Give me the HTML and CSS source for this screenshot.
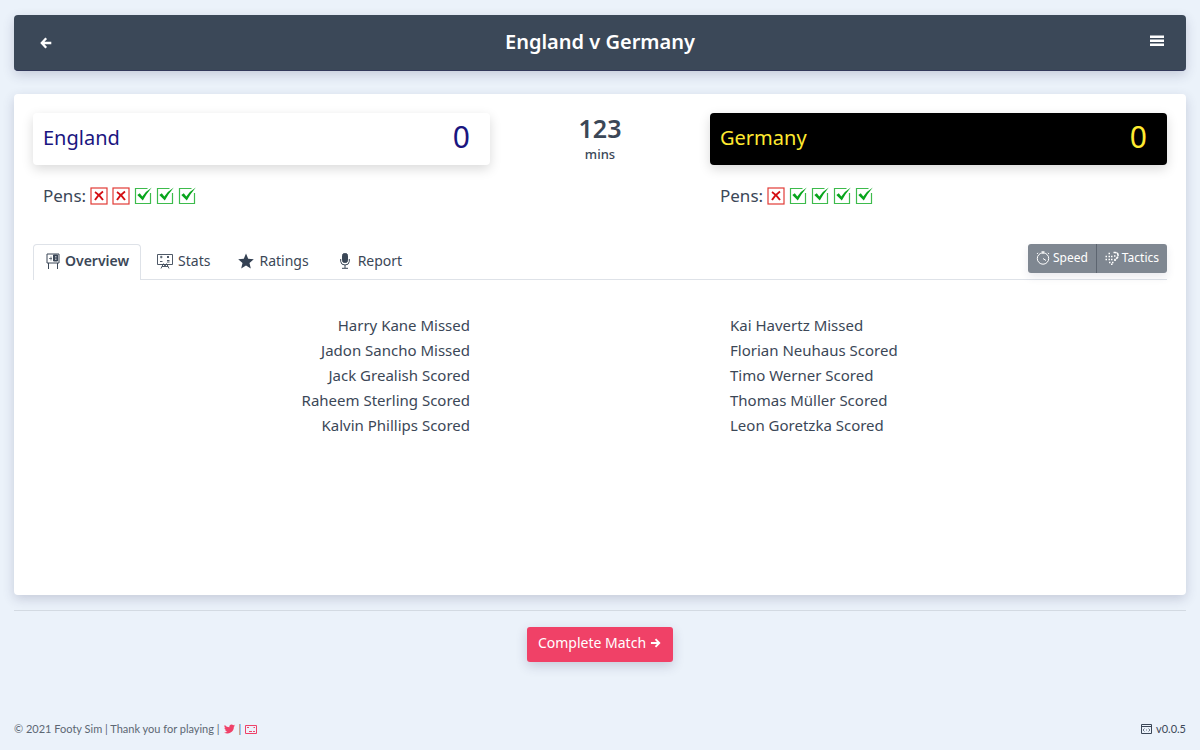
FILE: index.html
```
<!DOCTYPE html>
<html lang="en">
<head>
    <meta charset="UTF-8">
    <meta name="viewport" content="width=device-width, initial-scale=1.0">
    <title>Footy Sim</title>
    <link rel="stylesheet" href="styles.css">
</head>
<body>
    <svg class="sprite" aria-hidden="true">
        <symbol id="missed" viewBox="0 0 18 18">
            <rect x="1" y="1" width="16" height="16" fill="#fff" stroke="#e23b36" stroke-width="1.2"/>
            <path d="M5 5q4 2.500 8 8M13 4.500Q8 8 5 13" fill="none" stroke="#d40d12" stroke-width="1.900"/>
        </symbol>
        <symbol id="scored" viewBox="0 0 18 18">
            <path d="M13.500 1.500H1.500v15h15V6" fill="none" stroke="#3dbb4c" stroke-width="1.2"/>
            <path d="M3.300 8l2.500-1.800L8.300 9.500Q12 4 17.800.500 12.500 6.500 8.800 13.500z" fill="#08a51c"/>
        </symbol>
    </svg>

    <header class="navbar">
        <button class="nav-btn" aria-label="Back">
            <svg width="12" height="12" viewBox="0 0 12 12" fill="none" stroke="#fff" stroke-width="2.3"><path d="M6.200 1.300L1.800 6l4.400 4.700M2 6h9.300"/></svg>
        </button>
        <h1>England v Germany</h1>
        <button class="nav-btn" aria-label="Menu">
            <svg width="14" height="12" viewBox="0 0 14 12" fill="#fff"><path d="M0 .500h14v2.500H0zM0 4.500h14V7H0zM0 8.500h14V11H0z"/></svg>
        </button>
    </header>

    <main class="card">
        <section class="scoreboard">
            <div>
                <div class="team england"><h2>England</h2><span class="goals">0</span></div>
                <div class="pens">
                    Pens:
                    <svg><use href="#missed"/></svg>
                    <svg><use href="#missed"/></svg>
                    <svg><use href="#scored"/></svg>
                    <svg><use href="#scored"/></svg>
                    <svg><use href="#scored"/></svg>
                </div>
            </div>
            <div class="clock"><strong>123</strong><span>mins</span></div>
            <div>
                <div class="team germany"><h2>Germany</h2><span class="goals">0</span></div>
                <div class="pens">
                    Pens:
                    <svg><use href="#missed"/></svg>
                    <svg><use href="#scored"/></svg>
                    <svg><use href="#scored"/></svg>
                    <svg><use href="#scored"/></svg>
                    <svg><use href="#scored"/></svg>
                </div>
            </div>
        </section>

        <div class="toolbar">
            <nav class="tabs">
                <a class="tab active" href="#overview">
                    <svg width="14" height="16" viewBox="0 0 14 16" fill="none" stroke="#3b4757"><path d="M1 1h12v9H1zM2.500 10v6M11.500 10v6"/><path d="M3 5.500h3M5 3.500v4" stroke-width=".7"/><path d="M7.500 2h4v6h-4z" fill="#3b4757"/><path d="M9 3.500h1.500M9 5h1.500M9 6.500h1.500" stroke="#fff" stroke-width=".6"/></svg>
                    Overview
                </a>
                <a class="tab" href="#stats">
                    <svg width="16" height="16" viewBox="0 0 16 16" fill="none" stroke="#3b4757" stroke-width=".9"><path d="M.500 1.500h15v10H.500z"/><path d="M3 4h2.500M4.200 2.800v2.500M10 3l2 2M12 3l-2 2M3 8.500h2.500M10 7.500h2.500M10 9h2.500M6.500 10.500l-2.500 5M9.500 10.500l2.500 5M5 13.500h6M6.500 11l1.500 2 1.500-2"/></svg>
                    Stats
                </a>
                <a class="tab" href="#ratings">
                    <svg width="16" height="16" viewBox="0 0 16 16" fill="#344153"><path d="M8 .500l2.200 5.200 5.600.5-4.300 3.700 1.300 5.500L8 12.500l-4.800 2.900 1.300-5.500L.200 6.200l5.600-.5z"/></svg>
                    Ratings
                </a>
                <a class="tab" href="#report">
                    <svg width="16" height="16" viewBox="-2 0 16 16" fill="none" stroke="#3b4757"><rect x="3.500" y=".500" width="5" height="9" rx="2" fill="#3b4757"/><path d="M1.700 6v2.500Q2 12 6 12t4.300-3.500V6M6 12v3M3 15.300h6"/></svg>
                    Report
                </a>
            </nav>
            <div class="btn-group">
                <button>
                    <svg width="14" height="14" viewBox="0 0 14 14" fill="none" stroke="#fff"><circle cx="7" cy="7.500" r="5.700"/><path d="M5.500.800h3M7 1v2M7 7.500l3 2M2 1.800L1 3M12 1.800l1 1.200"/></svg>
                    Speed
                </button>
                <button>
                    <svg width="14" height="14" viewBox="0 0 14 14" fill="none" stroke="#fff"><path d="M.500 5.500h1.500M3.500 5.500H5M6 5.500h1.500M.500 8.500h1.500M3.500 8.500H5M6 8.500h1.500M3.500 2.500H5M4 11.500h1.500M7 11.500h1.500M6 13.300h1.500" stroke-width="1.500"/><path d="M8.500 1.500h1.500q3 0 3 2.700T10 8.500v1.500M9 5h1.500" stroke-width="1.7" stroke-dasharray="3 .600"/></svg>
                    Tactics
                </button>
            </div>
        </div>

        <section class="overview" id="overview">
            <ul>
                <li>Harry Kane Missed</li>
                <li>Jadon Sancho Missed</li>
                <li>Jack Grealish Scored</li>
                <li>Raheem Sterling Scored</li>
                <li>Kalvin Phillips Scored</li>
            </ul>
            <ul>
                <li>Kai Havertz Missed</li>
                <li>Florian Neuhaus Scored</li>
                <li>Timo Werner Scored</li>
                <li>Thomas Müller Scored</li>
                <li>Leon Goretzka Scored</li>
            </ul>
        </section>
    </main>

    <div class="actions">
        <button class="complete">
            Complete Match
            <svg width="11" height="10" viewBox="0 0 12 12" fill="none" stroke="#fff" stroke-width="2.300"><path d="M6 1.300L10.500 6 6 10.700M.500 6H10"/></svg>
        </button>
    </div>

    <footer>
        <div class="credits">
            <span>© 2021 Footy Sim | Thank you for playing |</span>
            <a href="#twitter" aria-label="Twitter"><svg width="11" height="10" viewBox="0 0 24 20" fill="#ef4168"><path d="M24 2.400a10 10 0 0 1-2.800.8A5 5 0 0 0 23.300.500a10 10 0 0 1-3.100 1.200 4.900 4.900 0 0 0-8.400 4.500A14 14 0 0 1 1.700 1a4.900 4.900 0 0 0 1.500 6.600 5 5 0 0 1-2.200-.6c0 2.300 1.600 4.400 3.900 4.900a5 5 0 0 1-2.200.1 4.900 4.900 0 0 0 4.600 3.400A10 10 0 0 1 0 17.400 14 14 0 0 0 21.500 5 10 10 0 0 0 24 2.400z"/></svg></a>
            <span>|</span>
            <a href="#contact" aria-label="Contact"><svg width="12" height="9" viewBox="0 0 12 9" fill="none" stroke="#ef4168"><path d="M.500.500h11v8H.500z"/><path d="M2 2.500h2M8.500 2.500H10M4 6.500h3M8 6.500h2"/></svg></a>
        </div>
        <div class="version">
            <svg width="11" height="10" viewBox="0 0 11 10" fill="none" stroke="#3b4757"><path d="M.500.500h10v9H.500zM.500 2.500h10"/><path d="M3.500 4.500L2 6l1.500 1.500M7.500 4.500L9 6 7.500 7.500M5 6h1" stroke-width=".7"/></svg>
            v0.0.5
        </div>
    </footer>
</body>
</html>
```
FILE: styles.css
```
* {
    box-sizing: border-box;
}

body {
    font-family: 'Noto Sans', sans-serif;
    font-size: 15px;
    background-color: #ebf2fa;
    color: #3b4757;
    margin: 0;
    padding: 15px 14px 13px;
    min-height: 100vh;
    display: flex;
    flex-direction: column;
}

h1, h2, ul {
    margin: 0;
    padding: 0;
    font-weight: 400;
}

ul {
    list-style: none;
}

button {
    font-family: inherit;
    color: #fff;
    border: none;
    cursor: pointer;
}

svg {
    flex: none;
}

.sprite {
    position: absolute;
    width: 0;
    height: 0;
}

.navbar {
    display: flex;
    align-items: center;
    justify-content: space-between;
    height: 56px;
    padding: 0 16px;
    background-color: #3b4858;
    border-bottom: 1px solid #33395a;
    border-radius: 4px;
    box-shadow: 0 4px 12px rgba(50, 50, 93, 0.2);
}

.navbar h1 {
    color: #fff;
    font-size: 20px;
    line-height: 28px;
    font-weight: 600;
    padding-bottom: 2px;
}

.nav-btn {
    display: flex;
    justify-content: center;
    width: 32px;
    padding: 8px 0;
    background: none;
}

.nav-btn:last-child {
    justify-content: flex-end;
    padding: 6px 6px 10px 0;
}

.card {
    margin-top: 23px;
    padding: 19px;
    background-color: #fff;
    border-radius: 4px;
    box-shadow: 0 4px 12px rgba(50, 50, 93, 0.2);
}

.scoreboard,
.overview {
    display: grid;
    grid-template-columns: 457fr 220fr 457fr;
}

.team {
    display: flex;
    align-items: center;
    justify-content: space-between;
    height: 52px;
    padding: 0 20px 4px 10px;
    border-radius: 4px;
    box-shadow: 0 4px 12px rgba(0, 0, 0, 0.15);
}

.team h2 {
    font-size: 20px;
}

.goals {
    font-size: 30px;
    line-height: 40px;
}

.england {
    background-color: #fff;
    color: #1a1580;
}

.germany {
    background-color: #000;
    color: #ffea30;
}

.pens {
    display: flex;
    align-items: center;
    gap: 4px;
    margin-top: 19px;
    padding-left: 10px;
    font-size: 17px;
    line-height: 24px;
}

.pens svg {
    width: 18px;
    height: 18px;
}

.clock {
    display: flex;
    flex-direction: column;
    align-items: center;
}

.clock strong {
    font-size: 25px;
    line-height: 30px;
    font-weight: 600;
}

.clock span {
    font-size: 13px;
    line-height: 22px;
    font-weight: 500;
}

.toolbar {
    display: flex;
    align-items: flex-start;
    justify-content: space-between;
    margin-top: 36px;
    border-bottom: 1px solid #dee2e8;
}

.tabs {
    display: flex;
    gap: 3px;
    margin-bottom: -1px;
}

.tab {
    display: flex;
    align-items: center;
    gap: 5px;
    height: 36px;
    padding: 0 11px 4px 12px;
    border: 1px solid transparent;
    border-bottom: none;
    border-radius: 4px 4px 0 0;
    color: inherit;
    font-size: 14px;
    text-decoration: none;
}

.tab.active {
    border-color: #dee2e8;
    background-color: #fff;
    font-weight: 600;
}

.btn-group {
    display: flex;
    border-radius: 3px;
    box-shadow: 0 4px 8px rgba(50, 50, 93, 0.1);
    overflow: hidden;
}

.btn-group button {
    display: flex;
    align-items: center;
    gap: 3px;
    height: 29px;
    padding: 0 8px 2px;
    background-color: #7f8791;
    font-size: 12px;
}

.btn-group button + button {
    border-left: 1px solid #5d6570;
}

.overview {
    min-height: 296px;
    padding-top: 33px;
    line-height: 25px;
}

.overview ul:first-child {
    padding-right: 20px;
    text-align: right;
}

.overview ul:last-child {
    grid-column: 3;
    padding-left: 20px;
}

.actions {
    display: flex;
    justify-content: center;
    margin-top: 15px;
    padding-top: 16px;
    border-top: 1px solid #d3dae2;
}

.complete {
    display: flex;
    align-items: center;
    gap: 4px;
    height: 35px;
    padding: 0 12px 4px 11px;
    background-color: #f04167;
    border-radius: 3px;
    box-shadow: 0 4px 12px rgba(50, 50, 93, 0.2);
    font-size: 14px;
}

footer {
    display: flex;
    justify-content: space-between;
    margin-top: auto;
    color: #5c6773;
    font-family: Lato, sans-serif;
    font-size: 11px;
    line-height: 16px;
}

footer svg {
    display: block;
}

.credits,
.version {
    display: flex;
    align-items: center;
    gap: 4px;
}

.version {
    color: #3b4757;
}
```
